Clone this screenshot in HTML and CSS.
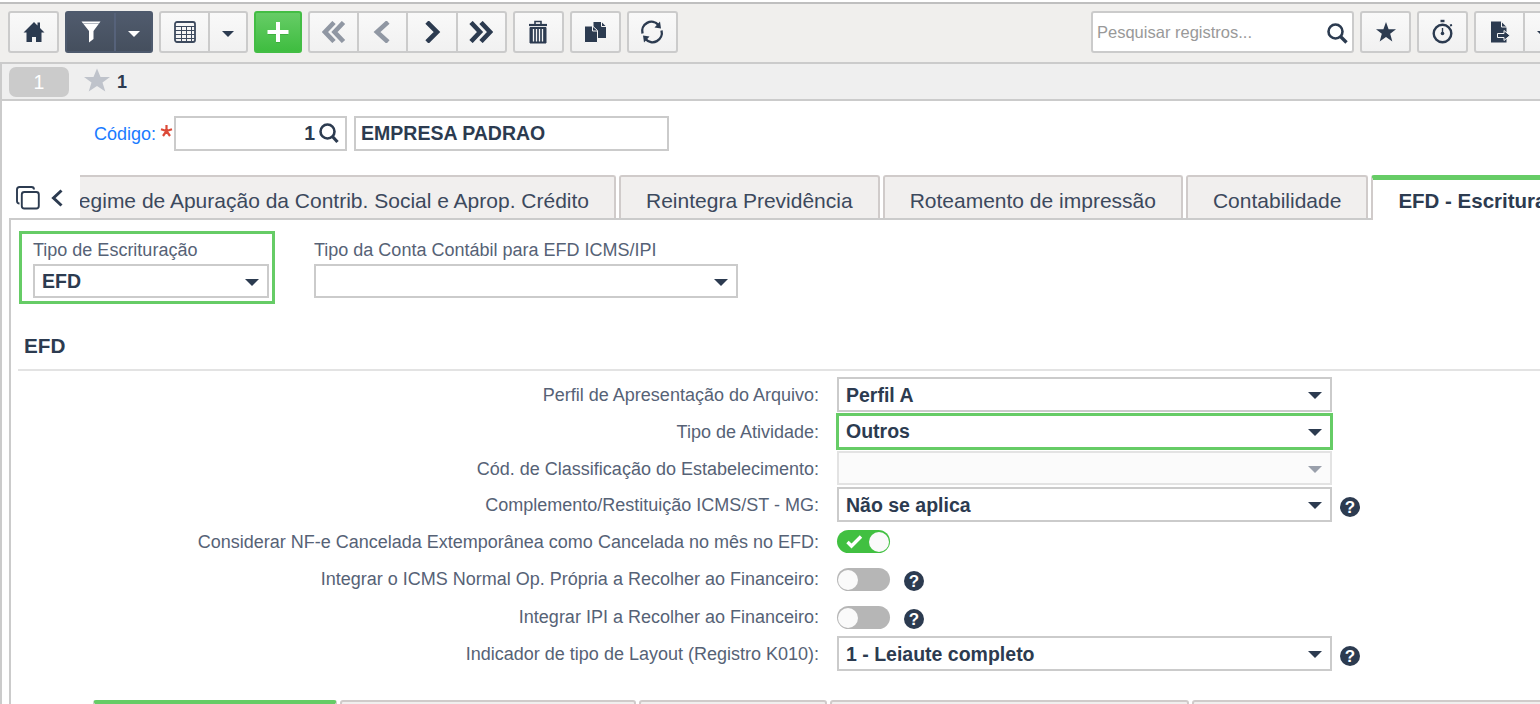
FILE: index.html
```html
<!DOCTYPE html>
<html lang="pt-BR">
<head>
    <meta charset="UTF-8">
    <title>Empresa - EFD</title>
    <link rel="stylesheet" href="styles.css">
</head>
<body>

<header class="toolbar">
    <div class="btn-group">
        <button class="btn"><svg width="22" height="22" viewBox="0 0 22 22"><path fill="#2c3b50" d="M11 1L0.5 11.5H3.5V21H9V16H13V21H18.5V11.5H21.5L17 7V1.5H14.5V4.5Z"/></svg></button>
    </div>
    <div class="btn-group dark">
        <button class="btn"><svg width="20" height="22" viewBox="0 0 20 22"><path fill="#fff" d="M0.5 0.5H19.5L12.5 10V18L8 21.5V10Z"/><path d="M2 2.5H18" stroke="#b5bac2"/></svg></button>
        <button class="btn btn-arrow"><i class="caret"></i></button>
    </div>
    <div class="btn-group">
        <button class="btn"><svg width="22" height="22" viewBox="0 0 22 22" fill="none" stroke="#3d4a5e"><rect x="1" y="1" width="20" height="20" rx="2" stroke-width="1.8"/><path d="M1 5.5H21M1 9.5H21M1 13.5H21M1 17.5H21M7.5 5.5V20M12.5 5.5V20M17.5 5.5V20"/></svg></button>
        <button class="btn btn-arrow"><i class="caret"></i></button>
    </div>
    <div class="btn-group green">
        <button class="btn"><svg width="22" height="22" viewBox="0 0 22 22"><path d="M11 2V22M1 12H21" stroke="#2f9b30" stroke-opacity=".5" stroke-width="4"/><path d="M11 1V21M0.5 11H21.5" stroke="#fff" stroke-width="4"/></svg></button>
    </div>
    <div class="btn-group nav">
        <button class="btn"><svg class="off" width="24" height="22" viewBox="0 0 24 22"><path d="M12 1.5L3 11L12 20.5M21.5 1.5L12.5 11L21.5 20.5"/></svg></button>
        <button class="btn"><svg class="off" width="24" height="22" viewBox="0 0 24 22"><path d="M17 1L6 11L17 21"/></svg></button>
        <button class="btn"><svg width="24" height="22" viewBox="0 0 24 22"><path d="M7 1L17 11L7 21"/></svg></button>
        <button class="btn"><svg width="24" height="22" viewBox="0 0 24 22"><path d="M2 1.5L11 11L2 20.5M12 1.5L21 11L12 20.5"/></svg></button>
    </div>
    <div class="btn-group">
        <button class="btn"><svg width="20" height="24" viewBox="0 0 20 24" fill="none" stroke="#2c3b50"><path d="M7 4V1.5H13V4" stroke-width="1.6"/><path d="M1 5H19" stroke-width="2.2"/><path fill="#2c3b50" d="M2 7.5H18V23H2Z"/><path d="M5.5 9V21.5M8.5 9V21.5M11.5 9V21.5M14.5 9V21.5" stroke="#f5f5f5" stroke-width="1.3"/></svg></button>
    </div>
    <div class="btn-group">
        <button class="btn"><svg width="22" height="22" viewBox="0 0 22 22"><path fill="#2c3b50" d="M9.5 1H17.5L22 5.5V17H9.5Z"/><path d="M17.5 1V5.5H22" stroke="#f5f5f5" fill="none"/><path fill="#2c3b50" stroke="#f5f5f5" d="M0.500 5H8.500L13.500 9.500V21.500H0.500Z"/><path d="M8.500 5V10H13" stroke="#f5f5f5" fill="none"/></svg></button>
    </div>
    <div class="btn-group">
        <button class="btn"><svg width="24" height="24" viewBox="0 0 24 24" fill="none"><path d="M2.5 13.5A9.300 9.300 0 0 1 18.500 5M21.500 10.500A9.300 9.300 0 0 1 5.500 19" stroke="#2c3b50" stroke-width="2.4"/><path fill="#2c3b50" d="M14.500 7.500L21 8.500L20 1.500ZM9.500 16.500L3 15.500L4 22.500Z"/></svg></button>
    </div>
    <div class="search">
        <span>Pesquisar registros...</span>
        <svg width="21" height="21" viewBox="0 0 21 21" fill="none" stroke="#2c3b50"><circle cx="8.5" cy="8.5" r="7" stroke-width="2.6"/><path d="M13.500 13.500L19.500 19.500" stroke-width="3.4"/></svg>
    </div>
    <div class="btn-group">
        <button class="btn"><svg width="22" height="22" viewBox="0 0 22 22"><path fill="#2c3b50" d="M11 1L13.6 8.300H21L15.200 12.800L17.300 20.500L11 16L4.700 20.500L6.800 12.800L1 8.300H8.400Z"/></svg></button>
    </div>
    <div class="btn-group">
        <button class="btn"><svg width="22" height="26" viewBox="0 0 22 26" fill="none" stroke="#2c3b50"><circle cx="10.5" cy="14.5" r="8.8" stroke-width="2.4"/><path d="M8.500 2H12.500" stroke-width="2.4"/><path d="M10.500 9V15" stroke-width="1.4"/><circle cx="10.5" cy="14.5" r="1.8" fill="#2c3b50" stroke="none"/><path d="M18 6.500L20 6" stroke-width="2"/></svg></button>
    </div>
    <div class="btn-group last">
        <button class="btn"><svg width="22" height="22" viewBox="0 0 22 22"><path fill="#2c3b50" d="M2 0.500H12L17.500 6V21.500H2Z"/><path d="M12.500 0.500V6H18" stroke="#f5f5f5" fill="none"/><path fill="#2c3b50" stroke="#f5f5f5" d="M8.500 12.500H15V9.500L21 14.500L15 19.500V16.500H8.500Z"/></svg></button>
        <button class="btn btn-arrow"><i class="caret"></i></button>
    </div>
</header>

<main class="page">
    <div class="record-bar">
        <span class="badge">1</span>
        <svg width="26" height="25" viewBox="0 0 26 25"><path fill="#bfc3cb" d="M13 0.5L16.500 9H26L18.500 14.500L21.300 23.500L13 18L4.700 23.500L7.500 14.500L0 9H9.500Z"/></svg>
        <b>1</b>
    </div>

    <div class="code-row">
        <label>Código:</label>
        <svg class="required" width="13" height="14" viewBox="0 0 13 14" stroke="#dc4a38" stroke-width="2.2"><path d="M6.500 7V1M6.500 7L1 5.200M6.500 7L12 5.200M6.500 7L3 12M6.500 7L10 12"/></svg>
        <div class="input code">
            1
            <svg width="20" height="21" viewBox="0 0 20 21" fill="none" stroke="#2c3b50"><circle cx="8.5" cy="8.500" r="7" stroke-width="2.6"/><path d="M13 13L18.500 19" stroke-width="3.200"/></svg>
        </div>
        <div class="input name">EMPRESA PADRAO</div>
    </div>

    <nav class="tabs">
        <svg width="24" height="24" viewBox="0 0 24 24" fill="none" stroke="#2c3b50" stroke-width="1.9"><rect x="5.8" y="6" width="17" height="16.5" rx="2.5"/><path d="M3.500 17.500Q1 17.500 1 15V3.500Q1 1 3.500 1H15.500Q18 1 18 3.500"/></svg>
        <svg class="back" width="12" height="18" viewBox="0 0 12 18" fill="none" stroke="#2c3b50" stroke-width="3"><path d="M10.500 1.500L2.500 9L10.500 16.500"/></svg>
        <div class="tab tab-cut">Regime de Apuração da Contrib. Social e Aprop. Crédito</div>
        <div class="tab">Reintegra Previdência</div>
        <div class="tab">Roteamento de impressão</div>
        <div class="tab">Contabilidade</div>
        <div class="tab active">EFD - Escrituração Fiscal Digital</div>
    </nav>

    <section class="panel">
        <div class="top-fields">
            <div class="field highlight">
                <label>Tipo de Escrituração</label>
                <div class="select">EFD<i class="caret"></i></div>
            </div>
            <div class="field wide">
                <label>Tipo da Conta Contábil para EFD ICMS/IPI</label>
                <div class="select"><i class="caret"></i></div>
            </div>
        </div>

        <h2>EFD</h2>

        <div class="form">
            <label>Perfil de Apresentação do Arquivo:</label>
            <div class="cell"><div class="select">Perfil A<i class="caret"></i></div></div>

            <label>Tipo de Atividade:</label>
            <div class="cell"><div class="select marked">Outros<i class="caret"></i></div></div>

            <label>Cód. de Classificação do Estabelecimento:</label>
            <div class="cell"><div class="select disabled"><i class="caret"></i></div></div>

            <label>Complemento/Restituição ICMS/ST - MG:</label>
            <div class="cell"><div class="select">Não se aplica<i class="caret"></i></div><span class="help">?</span></div>

            <label>Considerar NF-e Cancelada Extemporânea como Cancelada no mês no EFD:</label>
            <div class="cell"><div class="toggle on"><svg width="17" height="14" viewBox="0 0 17 14" fill="none" stroke="#fff" stroke-width="3.4"><path d="M1.500 7L5.500 11L15 1.500"/></svg><i></i></div></div>

            <label>Integrar o ICMS Normal Op. Própria a Recolher ao Financeiro:</label>
            <div class="cell"><div class="toggle"><i></i></div><span class="help">?</span></div>

            <label>Integrar IPI a Recolher ao Financeiro:</label>
            <div class="cell"><div class="toggle"><i></i></div><span class="help">?</span></div>

            <label>Indicador de tipo de Layout (Registro K010):</label>
            <div class="cell"><div class="select">1 - Leiaute completo<i class="caret"></i></div><span class="help">?</span></div>
        </div>

        <div class="subtabs">
            <div class="subtab active"></div>
            <div class="subtab"></div>
            <div class="subtab"></div>
            <div class="subtab"></div>
            <div class="subtab"></div>
        </div>
    </section>
</main>

</body>
</html>
```
FILE: styles.css
```css
* {
    box-sizing: border-box;
}
body {
    margin: 0;
    height: 704px;
    overflow: hidden;
    display: flex;
    flex-direction: column;
    font-family: "Liberation Sans", Arial, sans-serif;
    font-size: 18px;
    color: #2c3b50;
    background: #fff;
}
svg {
    display: block;
    flex: none;
}

/* toolbar */
.toolbar {
    flex: none;
    display: flex;
    gap: 6px;
    height: 60px;
    margin-top: 2px;
    padding: 7px 0 0 8px;
    border-top: 2px solid #bfbfbf;
    background: #f0efed;
}
.btn-group {
    flex: none;
    display: flex;
    height: 42px;
    border: 2px solid #cbcbcb;
    border-radius: 3px;
    background: linear-gradient(#f9f9f9, #f1f1f1);
}
.btn {
    display: flex;
    align-items: center;
    justify-content: center;
    width: 47px;
    height: 38px;
    padding: 0;
    border: 0;
    background: none;
}
.btn + .btn {
    width: 50px;
    border-left: 2px solid #cbcbcb;
}
.btn + .btn-arrow {
    width: 38px;
    padding-top: 3px;
}
.dark {
    border-color: #4e5a6d;
    background: linear-gradient(#505b6d, #454f5e);
}
.dark .btn + .btn-arrow {
    width: 37px;
    border-color: #56627a;
}
.green {
    border-color: #43bd44;
    background: linear-gradient(#66cc66, #3fbd40);
}
.green .btn {
    width: 44px;
}
.nav .btn + .btn {
    width: 49.3px;
}
.nav path {
    fill: none;
    stroke: #2c3b50;
    stroke-width: 4.6;
}
.nav .off path {
    stroke: #9097a3;
}
.nav .btn:first-child {
    width: 47px;
}
.last {
    width: 90px;
}
.caret {
    border: 6px solid transparent;
    border-top-color: #2c3b50;
    border-bottom: 0;
}
.dark .caret {
    border-top-color: #fff;
}
.search {
    flex: none;
    display: flex;
    align-items: center;
    justify-content: space-between;
    width: 263px;
    height: 42px;
    margin-left: auto;
    padding: 2px 4px 0 4px;
    border: 2px solid #cbcbcb;
    border-radius: 3px;
    background: #fff;
    color: #999;
    font-size: 16.5px;
}
.search span {
    margin-top: -1px;
}
.toolbar .last {
    margin-right: -24px;
}

/* page */
.page {
    flex: 1;
    min-height: 0;
    display: flex;
    flex-direction: column;
    border-top: 2px solid #cbcbcb;
    border-left: 2px solid #cbcbcb;
}
.record-bar {
    flex: none;
    display: flex;
    align-items: center;
    height: 37px;
    padding-left: 7px;
    border-bottom: 2px solid #cbcbcb;
    background: #efefef;
}
.record-bar svg {
    margin: -3px 7px 0 15px;
}
.badge {
    width: 60px;
    height: 30px;
    border-radius: 7px;
    background: #cbcbcb;
    color: #fff;
    font-size: 19.5px;
    line-height: 30px;
    text-align: center;
}
.record-bar b {
    margin-top: 2px;
}
.code-row {
    flex: none;
    display: flex;
    height: 74px;
    padding: 15px 0 0 92px;
}
.code-row label {
    color: #1a7bff;
    line-height: 36px;
}
.required {
    margin: 8px 1px 0 4px;
}
.input {
    display: flex;
    align-items: center;
    height: 35px;
    padding: 0 5px;
    border: 2px solid #cbcbcb;
    font-size: 19.5px;
    font-weight: bold;
}
.code {
    justify-content: flex-end;
    gap: 4px;
    width: 173px;
    margin-right: 7px;
    padding-right: 6px;
}
.name {
    width: 315px;
}

/* tabs */
.tabs {
    flex: none;
    display: flex;
    height: 43px;
    padding-left: 14px;
}
.tabs svg {
    margin-top: 11px;
}
.tabs .back {
    margin: 14px 17px 0 11px;
}
.tab {
    flex: none;
    height: 43px;
    margin-right: 3px;
    padding: 5px 25px 0;
    border: 2px solid #d0cbca;
    border-bottom: 0;
    border-radius: 3px 3px 0 0;
    background: #f1efee;
    font-size: 21px;
    line-height: 38px;
    white-space: nowrap;
    color: #3c495d;
}
.tab-cut {
    display: flex;
    justify-content: flex-end;
    width: 536px;
    overflow: hidden;
    border-left: 0;
    border-top-left-radius: 0;
}
.tab.active {
    z-index: 1;
    height: 45px;
    padding-top: 2px;
    border-top: 5px solid #66cc66;
    background: #fff;
    color: #2c3b50;
    font-size: 20.5px;
    font-weight: bold;
}

/* panel */
.panel {
    flex: 1;
    margin-left: 7px;
    border-top: 2px solid #cbcbcb;
    border-left: 2px solid #cbcbcb;
}
.top-fields {
    display: flex;
    gap: 36px;
    padding: 11px 0 0 8px;
}
.field {
    width: 256px;
    height: 73px;
    padding: 3px;
    color: #566276;
}
.field label {
    display: block;
    height: 30px;
    line-height: 32px;
}
.highlight {
    padding: 0 3px 0 11px;
    border: 3px solid #66cc66;
}
.wide {
    width: 430px;
}
.select {
    display: flex;
    align-items: center;
    justify-content: space-between;
    height: 34px;
    padding: 0 8px 0 7px;
    border: 2px solid #cbcbcb;
    background: #fff;
    color: #2c3b50;
    font-size: 19.5px;
    font-weight: bold;
}
.select .caret {
    margin: 2px 0 0 auto;
    border-width: 7px;
    border-bottom: 0;
}
h2 {
    height: 67px;
    margin: 0 0 0 7px;
    padding: 28px 0 0 6px;
    border-bottom: 2px solid #e3e3e3;
    font-size: 20.7px;
    line-height: 28px;
}
.form {
    display: grid;
    grid-template-columns: 808px 1fr;
    grid-template-rows: 37px 37px 36px 37px 37px 38px 37px 35px;
    column-gap: 18px;
    margin-top: 6px;
}
.form label {
    color: #566276;
    line-height: 36px;
    text-align: right;
    white-space: nowrap;
}
.cell {
    display: flex;
    align-items: flex-start;
}
.cell .select {
    width: 495px;
    height: 35px;
    padding-top: 1px;
}
.cell .select .caret {
    margin-top: 1px;
}
.cell .marked {
    width: 497px;
    height: 37px;
    margin: -1px;
    padding-top: 0;
    border: 3px solid #66cc66;
}
.cell .disabled {
    height: 34px;
    border-color: #e3e3e3;
    background: #fbfbfb;
}
.cell .disabled .caret {
    border-top-color: #9aa0ab;
}
.help {
    width: 20px;
    height: 20px;
    margin: 10px 0 0 8px;
    border-radius: 50%;
    background: #2c3b50;
    color: #fff;
    font-size: 17px;
    font-weight: bold;
    line-height: 21px;
    text-align: center;
}
.toggle {
    display: flex;
    align-items: center;
    width: 53px;
    height: 23px;
    margin-top: 7px;
    padding: 1px;
    border-radius: 12px;
    background: #b6b6b6;
}
.toggle i {
    width: 20px;
    height: 20px;
    border-radius: 50%;
    background: #fafafa;
}
.toggle + .help {
    margin: 10px 0 0 14px;
}
.toggle.on {
    justify-content: space-between;
    margin-top: 6px;
    padding-left: 9px;
    background: #41c041;
}

.subtabs {
    display: grid;
    grid-template-columns: 244px 296px 188px 359px 360px;
    column-gap: 3px;
    margin: 29px 0 0 82px;
}
.subtab {
    height: 40px;
    border: 2px solid #d0cbca;
    border-radius: 3px 3px 0 0;
    background: #f1efee;
}
.subtab.active {
    border-top: 5px solid #66cc66;
    background: #fff;
}
```
